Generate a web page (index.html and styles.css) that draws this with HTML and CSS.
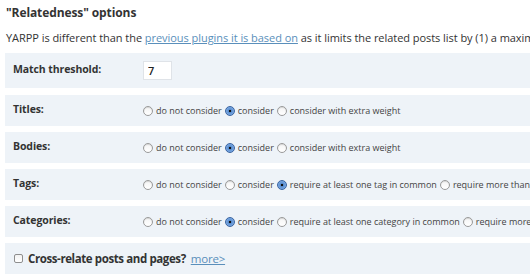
FILE: index.html
```html
<!DOCTYPE html>
<html>
<head>
<meta charset="utf-8">
<link rel="stylesheet" href="styles.css">
</head>
<body>
<div class="page">
  <h3 class="title">"Relatedness" options</h3>
  <p class="intro">YARPP is different than the <a href="#">previous plugins it is based on</a> as it limits the related posts list by (1) a maximum number and (2) a match threshold.</p>
  <div class="rows">
    <div class="row row-first">
      <div class="label">Match threshold:</div>
      <div class="field"><input class="num" type="text" value="7"></div>
    </div>
    <div class="row">
      <div class="label">Titles:</div>
      <div class="field">
        <label class="opt"><input type="radio" name="t"><span>do not consider</span></label>
        <label class="opt"><input type="radio" name="t" checked><span>consider</span></label>
        <label class="opt"><input type="radio" name="t"><span>consider with extra weight</span></label>
      </div>
    </div>
    <div class="row">
      <div class="label">Bodies:</div>
      <div class="field">
        <label class="opt"><input type="radio" name="b"><span>do not consider</span></label>
        <label class="opt"><input type="radio" name="b" checked><span>consider</span></label>
        <label class="opt"><input type="radio" name="b"><span>consider with extra weight</span></label>
      </div>
    </div>
    <div class="row">
      <div class="label">Tags:</div>
      <div class="field">
        <label class="opt"><input type="radio" name="g"><span>do not consider</span></label>
        <label class="opt"><input type="radio" name="g"><span>consider</span></label>
        <label class="opt"><input type="radio" name="g" checked><span>require at least one tag in common</span></label>
        <label class="opt"><input type="radio" name="g"><span>require more than one tag in common</span></label>
      </div>
    </div>
    <div class="row">
      <div class="label">Categories:</div>
      <div class="field">
        <label class="opt"><input type="radio" name="c"><span>do not consider</span></label>
        <label class="opt"><input type="radio" name="c" checked><span>consider</span></label>
        <label class="opt"><input type="radio" name="c"><span>require at least one category in common</span></label>
        <label class="opt"><input type="radio" name="c"><span>require more than one category in common</span></label>
      </div>
    </div>
    <div class="row row-check">
      <label class="check"><input type="checkbox"><span>Cross-relate posts and pages?</span></label>
      <a class="more" href="#">more&gt;</a>
    </div>
  </div>
</div>
</body>
</html>
```
FILE: styles.css
```css
html, body {
  margin: 0;
  padding: 0;
  background: #fff;
}
body {
  font-family: "Open Sans", "DejaVu Sans", sans-serif;
  color: #333;
  width: 530px;
  height: 279px;
  overflow: hidden;
}
.page {
  padding: 0 0 0 5px;
}
.title {
  margin: 0;
  padding: 4px 0 0 1px;
  font-size: 12px;
  line-height: 18px;
  font-weight: 700;
  letter-spacing: -0.1px;
  color: #333;
}
.intro {
  margin: 0;
  padding: 8px 0 0 1px;
  font-size: 11px;
  line-height: 16px;
  letter-spacing: -0.05px;
  white-space: nowrap;
  color: #333;
}
.intro a {
  color: #5a8fbb;
  text-decoration: underline;
}
.rows {
  margin-top: 7px;
  display: flex;
  flex-direction: column;
  gap: 6px;
}
.row {
  display: flex;
  align-items: center;
  height: 31px;
  background: #eef3f8;
  white-space: nowrap;
}
.row-first {
  height: 35px;
  margin-bottom: 1px;
}
.label {
  width: 130px;
  flex: none;
  padding-left: 8px;
  font-size: 10.5px;
  font-weight: 700;
  letter-spacing: -0.1px;
  color: #333;
  margin-top: -3px;
}
.field {
  display: flex;
  align-items: center;
}
.num {
  width: 29px;
  height: 19px;
  box-sizing: border-box;
  border: 1px solid #dfe3e8;
  background: #fff;
  font-family: "Open Sans", sans-serif;
  font-size: 11px;
  font-weight: 600;
  padding: 0 0 0 4px;
  margin: 0;
  outline: none;
  color: #222;
}
.opt {
  display: flex;
  align-items: center;
  font-size: 9px;
  color: #444;
  margin-right: 3px;
}
.opt input {
  -webkit-appearance: none;
  appearance: none;
  width: 10px;
  height: 10px;
  margin: 0 3px 0 0;
  border-radius: 50%;
  border: 1px solid #9a9a9a;
  background: linear-gradient(#f4f4f4, #ffffff);
  box-sizing: border-box;
  position: relative;
  box-shadow: inset 0 1px 1px rgba(0,0,0,0.12);
}
.opt input:checked {
  border-color: #3a64a0;
  background: radial-gradient(circle at 50% 50%, #111 0, #111 1.2px, #5b8fd0 1.6px, #8fbaf0 100%);
  box-shadow: none;
}
.row-check {
  padding-left: 9px;
}
.check {
  display: flex;
  align-items: center;
  font-size: 11.5px;
  font-weight: 700;
  letter-spacing: -0.4px;
  color: #333;
}
.check input {
  -webkit-appearance: none;
  appearance: none;
  width: 9px;
  height: 9px;
  margin: 0 5px 0 0;
  border: 1px solid #8e8e8e;
  border-radius: 2px;
  background: linear-gradient(#f2f2f2, #fff);
  box-sizing: border-box;
}
.more {
  margin-left: 5px;
  font-size: 11.5px;
  font-weight: 400;
  letter-spacing: -0.2px;
  color: #5a8fbb;
  text-decoration: underline;
}
```
